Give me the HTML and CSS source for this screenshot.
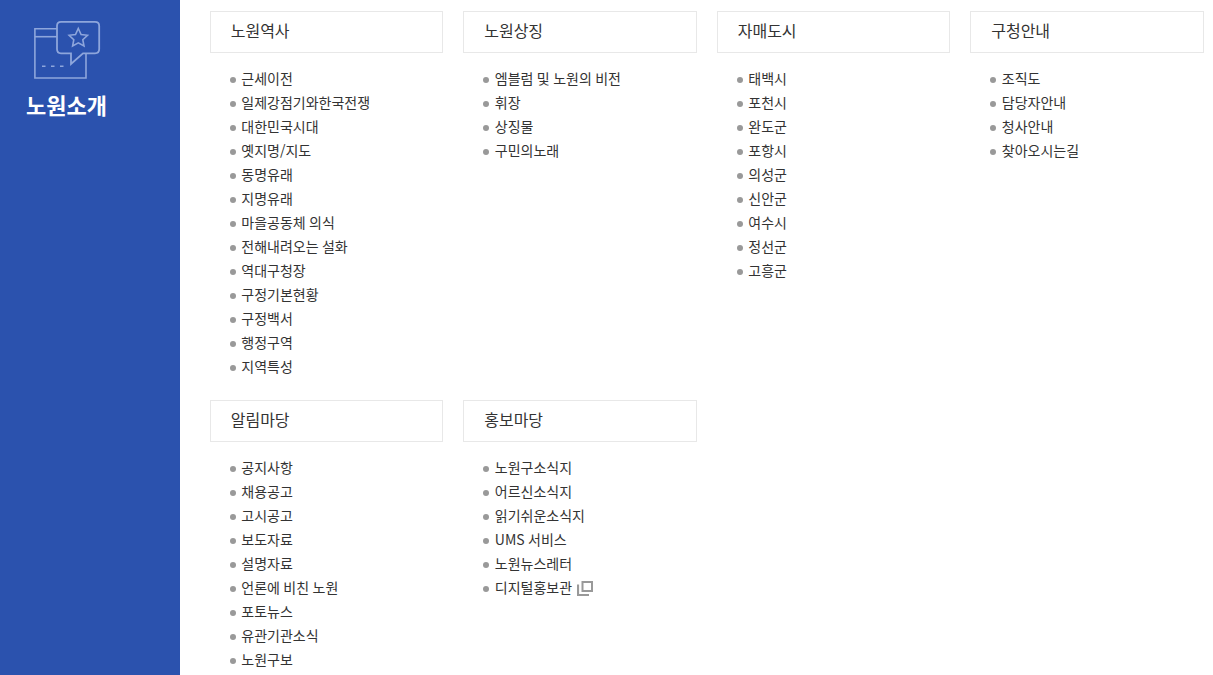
FILE: index.html

```html
<!DOCTYPE html>
<html lang="ko">
<head>
    <meta charset="UTF-8">
    <title>노원소개</title>
    <link rel="stylesheet" href="styles.css">
</head>
<body>
    <div class="wrap">
        <aside class="side">
            <svg class="side-icon" width="68" height="60" viewBox="0 0 68 60" fill="none" stroke="#8ea6dc" stroke-width="1.6">
                <path d="M23 7.700H0.900V57H52V32"/>
                <path d="M0.900 15.700H23"/>
                <path d="M8 45.300H11.500M17 45.300H20.500M26 45.300H29.500" stroke-width="1.500"/>
                <path d="M27 0.900H61Q65.200 0.900 65.200 5V28Q65.200 32.300 61 32.300H49L37 43V32.300H27Q23 32.300 23 28V5Q23 0.900 27 0.900Z" fill="#2b52ae" stroke-width="1.800"/>
                <path d="M44.300 7.500L47.100 13.500L53.500 14.300L48.800 18.700L50 25L44.300 21.900L38.600 25L39.800 18.700L35.100 14.300L41.500 13.500Z"/>
            </svg>
            <h1 class="side-title">노원소개</h1>
        </aside>
        <main class="menu">
            <section class="group">
                <h2>노원역사</h2>
                <ul>
                    <li>근세이전</li>
                    <li>일제강점기와한국전쟁</li>
                    <li>대한민국시대</li>
                    <li>옛지명/지도</li>
                    <li>동명유래</li>
                    <li>지명유래</li>
                    <li>마을공동체 의식</li>
                    <li>전해내려오는 설화</li>
                    <li>역대구청장</li>
                    <li>구정기본현황</li>
                    <li>구정백서</li>
                    <li>행정구역</li>
                    <li>지역특성</li>
                </ul>
            </section>
            <section class="group">
                <h2>노원상징</h2>
                <ul>
                    <li>엠블럼 및 노원의 비전</li>
                    <li>휘장</li>
                    <li>상징물</li>
                    <li>구민의노래</li>
                </ul>
            </section>
            <section class="group">
                <h2>자매도시</h2>
                <ul>
                    <li>태백시</li>
                    <li>포천시</li>
                    <li>완도군</li>
                    <li>포항시</li>
                    <li>의성군</li>
                    <li>신안군</li>
                    <li>여수시</li>
                    <li>정선군</li>
                    <li>고흥군</li>
                </ul>
            </section>
            <section class="group">
                <h2>구청안내</h2>
                <ul>
                    <li>조직도</li>
                    <li>담당자안내</li>
                    <li>청사안내</li>
                    <li>찾아오시는길</li>
                </ul>
            </section>
            <section class="group">
                <h2>알림마당</h2>
                <ul>
                    <li>공지사항</li>
                    <li>채용공고</li>
                    <li>고시공고</li>
                    <li>보도자료</li>
                    <li>설명자료</li>
                    <li>언론에 비친 노원</li>
                    <li>포토뉴스</li>
                    <li>유관기관소식</li>
                    <li>노원구보</li>
                </ul>
            </section>
            <section class="group">
                <h2>홍보마당</h2>
                <ul>
                    <li>노원구소식지</li>
                    <li>어르신소식지</li>
                    <li>읽기쉬운소식지</li>
                    <li>UMS 서비스</li>
                    <li>노원뉴스레터</li>
                    <li>디지털홍보관
                        <svg class="ext" width="16" height="15" viewBox="0 0 16 15" fill="none" stroke="#999" stroke-width="2">
                            <rect x="5.500" y="1" width="9.500" height="9"/>
                            <path d="M1 3.500V14H12" stroke-width="2.200"/>
                        </svg>
                    </li>
                </ul>
            </section>
        </main>
    </div>
</body>
</html>
```

FILE: styles.css

```css
* { box-sizing: border-box; }
html, body {
    margin: 0;
    height: 100%;
    overflow: hidden;
}
body {
    background: #fff;
    color: #333;
    font-family: "Noto Sans CJK KR", "Noto Sans", sans-serif;
}
.wrap {
    display: flex;
    height: 675px;
}
.side {
    width: 180px;
    flex-shrink: 0;
    background: #2b52ae;
    padding: 21px 0 0 26px;
}
.side-icon {
    display: block;
    margin-left: 8px;
}
.side-title {
    margin: 8px 0 0;
    color: #fff;
    font-size: 22px;
    line-height: 30px;
    font-weight: 700;
}
.menu {
    flex: 1;
    display: grid;
    grid-template-columns: repeat(4, 233.500px);
    column-gap: 20px;
    align-content: start;
    padding: 11px 0 0 29.700px;
}
.group h2 {
    margin: 0;
    height: 42px;
    padding-left: 20px;
    border: 1px solid #e8e8e8;
    font-size: 16px;
    line-height: 36px;
    font-weight: 400;
    color: #333;
}
.group ul {
    list-style: none;
    margin: 0;
    padding: 14px 0 21px 20px;
}
.group li {
    position: relative;
    padding-left: 11.600px;
    font-size: 14px;
    line-height: 22px;
    height: 24px;
    color: #333;
    word-spacing: -0.500px;
}
.group li::before {
    content: "";
    position: absolute;
    left: 0;
    top: 10px;
    width: 6px;
    height: 6px;
    border-radius: 50%;
    background: #999;
}
.ext {
    vertical-align: -3px;
    margin-left: 2px;
}
```
